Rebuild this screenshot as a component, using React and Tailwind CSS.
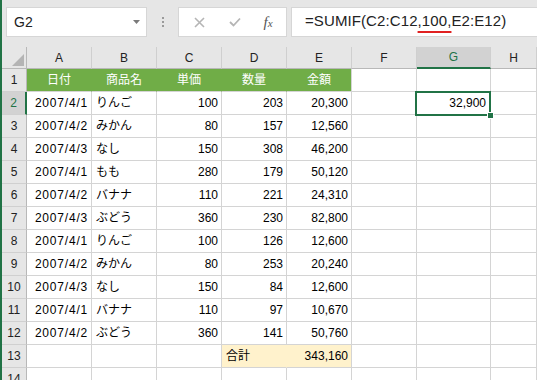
import React from "react";

const cols = ["A", "B", "C", "D", "E", "F", "G", "H"];

const rows = [
  ["2007/4/1", "りんご", "100", "203", "20,300"],
  ["2007/4/2", "みかん", "80", "157", "12,560"],
  ["2007/4/3", "なし", "150", "308", "46,200"],
  ["2007/4/1", "もも", "280", "179", "50,120"],
  ["2007/4/2", "バナナ", "110", "221", "24,310"],
  ["2007/4/3", "ぶどう", "360", "230", "82,800"],
  ["2007/4/1", "りんご", "100", "126", "12,600"],
  ["2007/4/2", "みかん", "80", "253", "20,240"],
  ["2007/4/3", "なし", "150", "84", "12,600"],
  ["2007/4/1", "バナナ", "110", "97", "10,670"],
  ["2007/4/2", "ぶどう", "360", "141", "50,760"],
];

const headers = ["日付", "商品名", "単価", "数量", "金額"];

const font = { fontFamily: '"Liberation Sans", "Noto Sans CJK JP", sans-serif' };

function RowHead({ n, active }) {
  return (
    <div
      className={
        "h-[23px] flex items-center justify-center border-b border-[#d0d0d0] text-[12px] " +
        (active
          ? "bg-[#d2d2d2] text-[#217346] border-r-2 border-r-[#217346]"
          : "bg-[#e6e6e6] text-[#222] border-r border-r-[#b8b8b8]")
      }
    >
      {n}
    </div>
  );
}

function Cell({ children, align = "left", fill, last }) {
  let cls = "h-[23px] flex items-center text-[12px] border-b border-r border-[#d4d4d4] whitespace-nowrap ";
  cls += align === "right" ? "justify-end pr-[3px] " : align === "center" ? "justify-center " : "pl-[4px] ";
  if (fill === "green") cls += "bg-[#70ad47] text-white " + (last ? "" : "border-r-[#70ad47] ");
  else cls += "text-black ";
  if (fill === "yellow") cls += "bg-[#fff2cc] " + (last ? "" : "border-r-[#fff2cc] ");
  return <div className={cls}>{children}</div>;
}

export default function App() {
  return (
    <div
      className="w-[537px] h-[380px] overflow-hidden bg-white border-l-2 border-[#217346]"
      style={font}
    >
      {/* formula bar */}
      <div className="h-[47px] bg-[#e6e6e6] flex items-start pt-[7px] pl-[4px]">
        <div className="w-[141px] h-[30px] bg-white border border-[#d6d6d6] flex items-center justify-between pl-[7px] pr-[6px]">
          <span className="text-[14px] text-[#222]">G2</span>
          <svg width="7" height="4" viewBox="0 0 7 4">
            <path d="M0 0h7L3.5 4z" fill="#7a7a7a" />
          </svg>
        </div>
        <div className="w-[31px] h-[30px] flex flex-col items-center justify-center gap-[2px]">
          <span className="w-[2px] h-[2px] bg-[#9a9a9a]" />
          <span className="w-[2px] h-[2px] bg-[#9a9a9a]" />
          <span className="w-[2px] h-[2px] bg-[#9a9a9a]" />
        </div>
        <div className="w-[109px] h-[30px] bg-white border border-[#d6d6d6] flex items-center">
          <div className="w-[38px] flex justify-center pl-[2px]">
            <svg width="11" height="11" viewBox="0 0 11 11">
              <path d="M1 1l9 9M10 1l-9 9" stroke="#b5b5b5" strokeWidth="1.6" />
            </svg>
          </div>
          <div className="w-[36px] flex justify-center">
            <svg width="12" height="10" viewBox="0 0 12 10">
              <path d="M1 5l3.5 3.5L11 1.5" stroke="#b5b5b5" strokeWidth="1.8" fill="none" />
            </svg>
          </div>
          <div className="w-[30px] flex justify-center">
            <span
              className="italic text-[15px] text-[#555] leading-none"
              style={{ fontFamily: '"Liberation Serif", serif' }}
            >
              f<span className="text-[11px]">x</span>
            </span>
          </div>
        </div>
        <div className="ml-[4px] flex-1 h-[30px] bg-white border border-r-0 border-[#d6d6d6] flex items-center pl-[13px] pb-[2px]">
          <span className="text-[15px] text-[#222] tracking-[0.1px]">
            =SUMIF(C2:C12
            <span className="underline decoration-[#e02020] decoration-2 underline-offset-[5px]">,100,</span>
            E2:E12)
          </span>
        </div>
      </div>

      {/* sheet */}
      <div className="grid grid-cols-[25px_65px_65px_65px_65px_65px_65px_74px_1fr]">
        {/* corner */}
        <div className="h-[22px] bg-[#e6e6e6] border-b border-r border-[#b8b8b8] flex items-end justify-end p-[2px]">
          <svg width="12" height="12" viewBox="0 0 12 12">
            <path d="M12 0v12H0z" fill="#b4b4b4" />
          </svg>
        </div>
        {cols.map((c) => (
          <div
            key={c}
            className={
              "h-[22px] flex items-center justify-center text-[12px] border-r border-r-[#cfcfcf] " +
              (c === "G"
                ? "bg-[#d2d2d2] text-[#217346] border-b-2 border-b-[#217346]"
                : "bg-[#e6e6e6] text-[#222] border-b border-b-[#b8b8b8]")
            }
          >
            {c}
          </div>
        ))}

        {/* row 1 */}
        <RowHead n={1} />
        {headers.map((h, i) => (
          <Cell key={h} align="center" fill="green" last={i === 4}>
            {h}
          </Cell>
        ))}
        <Cell />
        <Cell />
        <Cell />

        {rows.map((r, i) => {
          const n = i + 2;
          return (
            <React.Fragment key={n}>
              <RowHead n={n} active={n === 2} />
              <Cell align="right">
                <span className="tracking-[0.8px]">{r[0]}</span>
              </Cell>
              <Cell>{r[1]}</Cell>
              <Cell align="right">{r[2]}</Cell>
              <Cell align="right">{r[3]}</Cell>
              <Cell align="right">{r[4]}</Cell>
              <Cell />
              {n === 2 ? (
                <div className="relative h-[23px] flex items-center justify-end pr-[4px] text-[12px] text-black border-b border-r border-[#d4d4d4]">
                  32,900
                  <div className="absolute left-[-2px] top-[-1px] w-[76px] h-[25px] border-2 border-[#217346]" />
                  <div className="absolute left-[70px] top-[20px] w-[7px] h-[7px] bg-[#217346] border border-white" />
                </div>
              ) : (
                <Cell />
              )}
              <Cell />
            </React.Fragment>
          );
        })}

        {/* row 13 */}
        <RowHead n={13} />
        <Cell />
        <Cell />
        <Cell />
        <Cell fill="yellow">合計</Cell>
        <Cell align="right" fill="yellow" last>
          343,160
        </Cell>
        <Cell />
        <Cell />
        <Cell />

        {/* row 14 */}
        <RowHead n={14} />
        {cols.map((c) => (
          <Cell key={c} />
        ))}
      </div>
    </div>
  );
}
